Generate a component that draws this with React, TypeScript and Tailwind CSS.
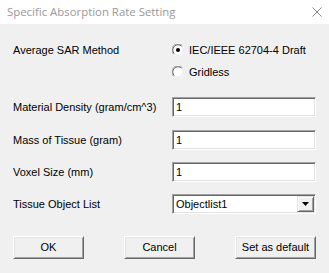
import React from "react";

function Radio({ checked }: { checked?: boolean }) {
  return (
    <svg width="12" height="12" viewBox="0 0 12 12" className="shrink-0">
      <circle cx="6" cy="6" r="5.5" fill="#ffffff" />
      <path d="M1.6 10.4 A5.5 5.5 0 0 1 10.4 1.6" fill="none" stroke="#a0a0a0" strokeWidth="1" />
      <path d="M10.4 1.6 A5.5 5.5 0 0 1 1.6 10.4" fill="none" stroke="#ffffff" strokeWidth="1" />
      <path d="M2.3 9.7 A4.5 4.5 0 0 1 9.7 2.3" fill="none" stroke="#696969" strokeWidth="1" />
      <path d="M9.7 2.3 A4.5 4.5 0 0 1 2.3 9.7" fill="none" stroke="#e3e3e3" strokeWidth="1" />
      {checked && <circle cx="6" cy="6" r="2" fill="#000000" />}
    </svg>
  );
}

function Sunken({ children, className = "" }: { children: React.ReactNode; className?: string }) {
  return (
    <div
      className={
        "h-[20px] w-[144px] bg-white border border-t-[#a0a0a0] border-l-[#a0a0a0] border-b-white border-r-white shadow-[inset_1px_1px_0_#696969,inset_-1px_-1px_0_#e3e3e3] flex items-center " +
        className
      }
    >
      {children}
    </div>
  );
}

function Btn({ label, w }: { label: string; w: string }) {
  return (
    <div
      className={
        "h-[23px] " +
        w +
        " bg-[#f0f0f0] border border-t-white border-l-white border-b-[#696969] border-r-[#696969] shadow-[inset_1px_1px_0_#e3e3e3,inset_-1px_-1px_0_#a0a0a0] flex items-center justify-center text-black"
      }
    >
      {label}
    </div>
  );
}

export default function App() {
  return (
    <div
      className="w-[329px] h-[273px] bg-[#f0f0f0] overflow-hidden text-[11px] text-black"
      style={{ fontFamily: '"Liberation Sans", Arial, sans-serif' }}
    >
      <div className="h-[24px] bg-white flex items-center justify-between pl-[7px] pr-[7px]">
        <span
          className="text-[11.4px] text-[#999999]"
          style={{ fontFamily: '"Open Sans", "Noto Sans", sans-serif' }}
        >
          Specific Absorption Rate Setting
        </span>
        <svg width="10" height="10" viewBox="0 0 10 10">
          <path d="M0.5 0.5 L9.5 9.5 M9.5 0.5 L0.5 9.5" stroke="#8a8a8a" strokeWidth="1" />
        </svg>
      </div>
      <div className="pl-[13px] pr-[13px] pt-[15px]">
        <div className="flex">
          <div className="w-[159px] h-[22px] flex items-center">Average SAR Method</div>
          <div className="flex flex-col">
            <div className="h-[22px] flex items-center gap-[5px]">
              <Radio checked />
              <span>IEC/IEEE 62704-4 Draft</span>
            </div>
            <div className="h-[22px] flex items-center gap-[5px]">
              <Radio />
              <span>Gridless</span>
            </div>
          </div>
        </div>

        <div className="flex items-center mt-[14px]">
          <div className="w-[159px]">Material Density (gram/cm^3)</div>
          <Sunken>
            <span className="pl-[3px]">1</span>
          </Sunken>
        </div>
        <div className="flex items-center mt-[13px]">
          <div className="w-[159px]">Mass of Tissue (gram)</div>
          <Sunken>
            <span className="pl-[3px]">1</span>
          </Sunken>
        </div>
        <div className="flex items-center mt-[12px]">
          <div className="w-[159px]">Voxel Size (mm)</div>
          <Sunken>
            <span className="pl-[3px]">1</span>
          </Sunken>
        </div>
        <div className="flex items-center mt-[12px]">
          <div className="w-[159px]">Tissue Object List</div>
          <Sunken className="justify-between">
            <span className="pl-[3px]">Objectlist1</span>
            <div className="h-[16px] w-[17px] bg-[#f0f0f0] border border-t-[#e3e3e3] border-l-[#e3e3e3] border-b-[#696969] border-r-[#696969] shadow-[inset_1px_1px_0_#ffffff,inset_-1px_-1px_0_#a0a0a0] flex items-center justify-center mr-[1px]">
              <svg width="7" height="4" viewBox="0 0 7 4">
                <path d="M0 0 H7 L3.5 4 Z" fill="#000000" />
              </svg>
            </div>
          </Sunken>
        </div>

        <div className="flex justify-between mt-[22px]">
          <Btn label="OK" w="w-[71px]" />
          <Btn label="Cancel" w="w-[71px]" />
          <Btn label="Set as default" w="w-[81px]" />
        </div>
      </div>
    </div>
  );
}
